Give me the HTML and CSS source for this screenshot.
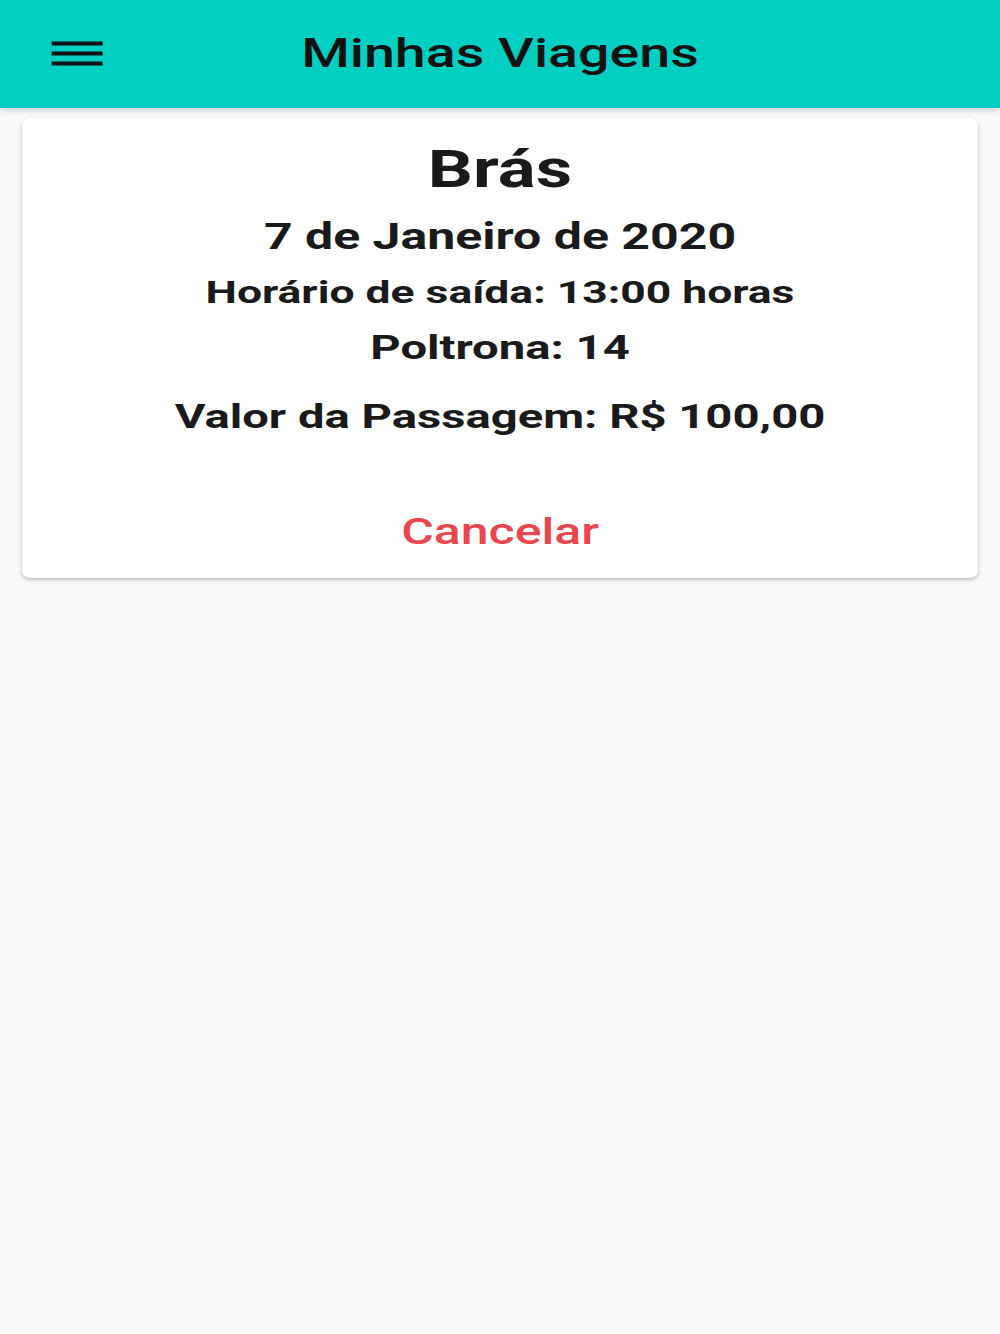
FILE: index.html
```html
<!DOCTYPE html>
<html lang="pt-BR">
<head>
    <meta charset="UTF-8">
    <meta name="viewport" content="width=device-width, initial-scale=1.0">
    <title>Minhas Viagens</title>
    <link rel="stylesheet" href="styles.css">
</head>
<body>
    <div class="app">
        <header class="toolbar">
            <button class="menu-button" aria-label="Menu">
                <svg width="37" height="25" viewBox="0 0 37 25">
                    <rect x="0" y="0.5" width="37" height="4" fill="#111"/>
                    <rect x="0" y="10.5" width="37" height="4" fill="#111"/>
                    <rect x="0" y="20.5" width="37" height="4" fill="#111"/>
                </svg>
            </button>
            <h1 class="toolbar-title">Minhas Viagens</h1>
            <div></div>
        </header>

        <main class="trip-list">
            <div class="trip-card">
                <h2 class="trip-destination">Brás</h2>
                <p class="trip-date">7 de Janeiro de 2020</p>
                <p class="trip-info">Horário de saída: 13:00 horas</p>
                <p class="trip-info seat">Poltrona: 14</p>
                <p class="trip-price">Valor da Passagem: R$ 100,00</p>
                <button class="cancel-button">Cancelar</button>
            </div>
        </main>
    </div>
</body>
</html>
```

FILE: styles.css
```css
html, body {
    margin: 0;
    background-color: #fafafa;
    overflow: hidden;
}
body {
    font-family: Roboto, "Noto Sans", sans-serif;
    color: #1a1a1a;
    height: 1334px;
}
/* the app was captured on a narrower screen and stretched sideways */
.app {
    width: 720px;
    transform: scaleX(1.3889);
    transform-origin: 0 0;
}
.toolbar {
    height: 108px;
    background-color: #00cfc1;
    display: grid;
    grid-template-columns: 1fr auto 1fr;
    align-items: center;
    box-shadow: 0 2px 6px rgba(0, 0, 0, 0.18);
    position: relative;
    z-index: 1;
}
.menu-button {
    justify-self: start;
    margin-left: 37px;
    padding: 0;
    border: none;
    background: none;
    display: flex;
    margin-top: -2px;
}
.toolbar-title {
    margin: 0;
    font-size: 40px;
    font-weight: 500;
    line-height: 108px;
    color: #111;
}
.trip-list {
    padding: 10px 16px;
}
.trip-card {
    background-color: #fff;
    border-radius: 6px;
    box-shadow: 0 2px 4px rgba(0, 0, 0, 0.25);
    padding: 22px 16px 24px;
    display: flex;
    flex-direction: column;
    align-items: center;
    text-align: center;
}
.trip-card p {
    margin: 0;
}
.trip-destination {
    margin: 0;
    font-size: 51px;
    font-weight: 700;
    line-height: 60px;
}
.trip-date {
    margin-top: 15px !important;
    font-size: 36px;
    font-weight: 700;
    line-height: 44px;
}
.trip-info {
    margin-top: 13px !important;
    font-size: 32px;
    font-weight: 700;
    line-height: 40px;
}
.trip-info.seat {
    margin-top: 15px !important;
    font-size: 34px;
}
.trip-price {
    margin-top: 27px !important;
    font-size: 34px;
    font-weight: 700;
    line-height: 44px;
}
.cancel-button {
    margin-top: 72px;
    padding: 0;
    border: none;
    background: none;
    font-family: inherit;
    font-size: 36px;
    font-weight: 500;
    line-height: 44px;
    color: #e8474e;
}
```
